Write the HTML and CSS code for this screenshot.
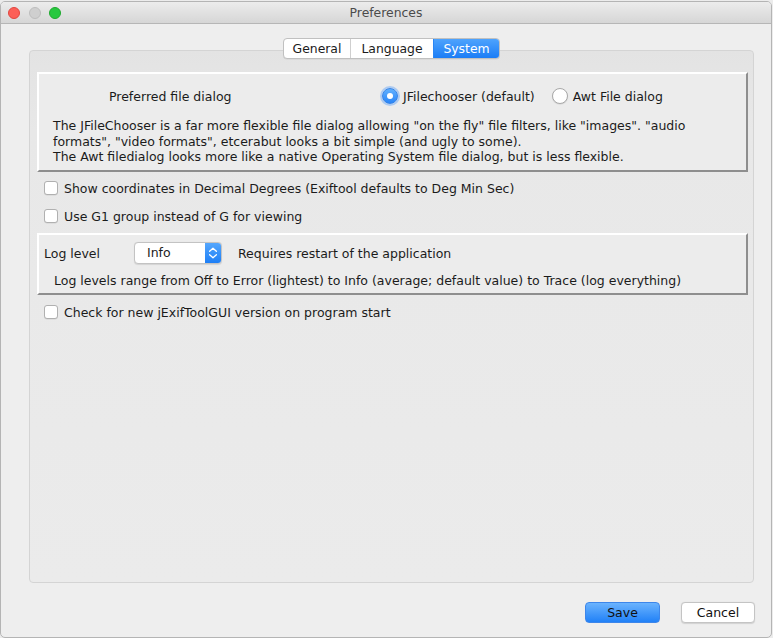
FILE: index.html
```html
<!DOCTYPE html>
<html>
<head>
<meta charset="utf-8">
<title>Preferences</title>
<link rel="stylesheet" href="styles.css">
</head>
<body>
<div class="window">
  <div class="titlebar">
    <div class="lights">
      <span class="light red"></span>
      <span class="light gray"></span>
      <span class="light green"></span>
    </div>
    <div class="title">Preferences</div>
    <div class="spacer"></div>
  </div>
  <div class="content">
    <div class="tabs">
      <div class="tab-group">
        <div class="tab tab-general">General</div>
        <div class="tab tab-language">Language</div>
        <div class="tab tab-system active">System</div>
      </div>
    </div>
    <div class="panel">
      <div class="etched box-dialog">
        <div class="dialog-row">
          <div class="dialog-label">Preferred file dialog</div>
          <div class="radio-item first"><span class="radio checked"></span><span>JFilechooser (default)</span></div>
          <div class="radio-item"><span class="radio"></span><span>Awt File dialog</span></div>
        </div>
        <p class="desc">The JFileChooser is a far more flexible file dialog allowing "on the fly" file filters, like "images". "audio<br>formats", "video formats", etcerabut looks a bit simple (and ugly to some).<br>The Awt filedialog looks more like a native Operating System file dialog, but is less flexible.</p>
      </div>
      <div class="check-row first-check"><span class="checkbox"></span><span>Show coordinates in Decimal Degrees (Exiftool defaults to Deg Min Sec)</span></div>
      <div class="check-row second-check"><span class="checkbox"></span><span>Use G1 group instead of G for viewing</span></div>
      <div class="etched box-log">
        <div class="log-row">
          <div class="log-label">Log level</div>
          <div class="combo">
            <span class="combo-text">Info</span>
            <span class="combo-arrows">
              <svg width="16" height="20" viewBox="0 0 16 20"><path d="M4.6 8.2 L8 5.2 L11.4 8.2" fill="none" stroke="#fff" stroke-width="1.3" stroke-linecap="round" stroke-linejoin="round"/><path d="M4.6 11.8 L8 14.8 L11.4 11.8" fill="none" stroke="#fff" stroke-width="1.3" stroke-linecap="round" stroke-linejoin="round"/></svg>
            </span>
          </div>
          <div class="log-note">Requires restart of the application</div>
        </div>
        <div class="log-desc">Log levels range from Off to Error (lightest) to Info (average; default value) to Trace (log everything)</div>
      </div>
      <div class="check-row third-check"><span class="checkbox"></span><span>Check for new jExifToolGUI version on program start</span></div>
    </div>
    <div class="buttons">
      <button class="btn btn-save">Save</button>
      <button class="btn btn-cancel">Cancel</button>
    </div>
  </div>
</div>
</body>
</html>
```
FILE: styles.css
```css
html, body {
  margin: 0;
  padding: 0;
}
body {
  background: #ececec;
  font-family: "DejaVu Sans", sans-serif;
  font-size: 12.5px;
  color: #1b1b1b;
}
.window {
  box-sizing: border-box;
  width: 772px;
  height: 637px;
  margin-top: 1px;
  border: 1px solid #b4b4b4;
  border-radius: 5px 5px 5px 5px;
  background: #eeeeee;
  display: flex;
  flex-direction: column;
  overflow: hidden;
}
.titlebar {
  height: 21px;
  border-bottom: 1px solid #b6b6b6;
  background: linear-gradient(#ececec, #d6d6d6);
  display: grid;
  grid-template-columns: 1fr auto 1fr;
  align-items: center;
}
.lights {
  display: flex;
  gap: 8.5px;
  padding-left: 7px;
}
.light {
  box-sizing: border-box;
  width: 12px;
  height: 12px;
  border-radius: 50%;
}
.light.red { background: #fc5f57; border: 1px solid #e2463f; }
.light.gray { background: #cfcfcf; border: 1px solid #bdbdbd; }
.light.green { background: #27c83f; border: 1px solid #1ea92e; }
.title {
  color: #4b4b4b;
  font-size: 12.4px;
  line-height: 21px;
}
.content {
  flex: 1;
  display: flex;
  flex-direction: column;
  padding: 14px 17px 0 28px;
}
.tabs {
  display: flex;
  justify-content: center;
  margin-bottom: -9px;
  position: relative;
  z-index: 1;
}
.tab-group {
  display: flex;
  height: 19px;
  border: 1px solid #c0c0c0;
  border-radius: 4px;
  background: #ffffff;
  overflow: hidden;
  box-shadow: 0 0.5px 0.5px rgba(0,0,0,0.08);
}
.tab {
  box-sizing: border-box;
  height: 19px;
  line-height: 19px;
  text-align: center;
  color: #1b1b1b;
  font-size: 12.4px;
}
.tab + .tab { border-left: 1px solid #cfcfcf; }
.tab-general { width: 66px; }
.tab-language { width: 83px; }
.tab-system { width: 66px; }
.tab.active {
  background: linear-gradient(#4ea3fd, #1b7df6);
  color: #ffffff;
  border-left-color: #2a86f5;
}
.panel {
  box-sizing: border-box;
  height: 533px;
  border: 1px solid #d4d4d4;
  border-radius: 4px;
  background: linear-gradient(#e3e3e3 0, #e8e8e8 80px, #ebebeb 100%);
  padding: 21px 5px 0 7px;
}
.etched {
  border-style: solid;
  border-width: 2px;
  border-color: #ffffff #8e8e8e #8e8e8e #ffffff;
  background: #ececec;
}
.box-dialog {
  height: 100px;
  box-sizing: border-box;
  padding-top: 12px;
}
.dialog-row {
  display: flex;
  align-items: center;
  height: 20px;
  padding-left: 70px;
}
.dialog-label {
  width: 273px;
}
.radio-item {
  display: flex;
  align-items: center;
  gap: 5px;
}
.radio-item.first { margin-right: 17px; }
.radio {
  box-sizing: border-box;
  width: 16px;
  height: 16px;
  border-radius: 50%;
  background: #ffffff;
  border: 1px solid #a9a9a9;
  box-shadow: 0 0.5px 1px rgba(0,0,0,0.12);
  position: relative;
}
.radio.checked {
  background: linear-gradient(#62b1fe, #2a85f7);
  border: 1px solid #3584ea;
  box-shadow: 0 0 0 2px rgba(120,175,245,0.55);
}
.radio.checked::after {
  content: "";
  position: absolute;
  left: 4px;
  top: 4px;
  width: 6px;
  height: 6px;
  border-radius: 50%;
  background: #ffffff;
}
.desc {
  margin: 12px 0 0 0;
  padding-left: 14px;
  line-height: 15.5px;
}
.check-row {
  display: flex;
  align-items: center;
  gap: 6px;
  height: 20px;
  margin-left: 7px;
}
.first-check { margin-top: 6px; }
.second-check { margin-top: 8px; }
.third-check { margin-top: 7px; }
.checkbox {
  box-sizing: border-box;
  width: 14px;
  height: 14px;
  border-radius: 3px;
  background: #ffffff;
  border: 1px solid #b0b0b0;
  box-shadow: 0 0.5px 0.5px rgba(0,0,0,0.1);
}
.box-log {
  margin-top: 7px;
  height: 62px;
  box-sizing: border-box;
  padding: 7px 0 0 5px;
}
.log-row {
  display: flex;
  align-items: center;
  height: 22px;
}
.log-label { width: 90px; }
.combo {
  box-sizing: border-box;
  width: 88px;
  height: 22px;
  display: flex;
  border: 1px solid #c3c3c3;
  border-radius: 4px;
  background: #ffffff;
  overflow: hidden;
  box-shadow: 0 0.5px 1px rgba(0,0,0,0.1);
}
.combo-text {
  flex: 1;
  padding-left: 12px;
  line-height: 20px;
}
.combo-arrows {
  width: 16px;
  height: 20px;
  background: linear-gradient(#55a7fd, #1e7ff6);
  display: flex;
}
.log-note { margin-left: 16px; }
.log-desc {
  margin-top: 9px;
  padding-left: 10px;
  line-height: 16px;
}
.buttons {
  display: flex;
  justify-content: flex-end;
  gap: 21px;
  margin-top: 19px;
  margin-right: -1px;
}
.btn {
  box-sizing: border-box;
  height: 21px;
  font-family: "DejaVu Sans", sans-serif;
  font-size: 12.5px;
  color: #111111;
  border-radius: 4px;
  padding: 0;
  line-height: 19px;
}
.btn-save {
  width: 75px;
  border: 1px solid #3d86ea;
  background: linear-gradient(#6ab3fe, #2181f7);
}
.btn-cancel {
  width: 74px;
  border: 1px solid #c4c4c4;
  background: #ffffff;
  box-shadow: 0 0.5px 1px rgba(0,0,0,0.12);
}
```
